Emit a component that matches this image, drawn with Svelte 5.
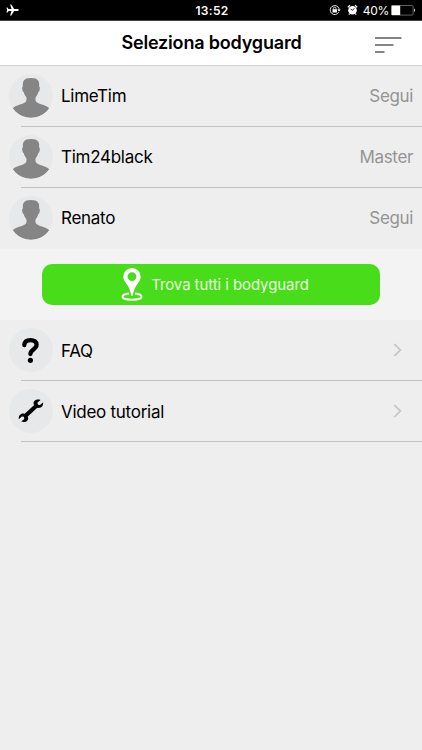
<script lang="ts">
	interface Person {
		name: string;
		action: string;
	}

	const people: Person[] = [
		{ name: 'LimeTim', action: 'Segui' },
		{ name: 'Tim24black', action: 'Master' },
		{ name: 'Renato', action: 'Segui' }
	];

	const links = [
		{ label: 'FAQ', icon: 'help' },
		{ label: 'Video tutorial', icon: 'wrench' }
	];
</script>

<div class="screen">
	<div class="status-bar">
		<div class="status-left">
			<svg width="13" height="12" viewBox="0 0 13 12" fill="#fff">
				<path
					d="M12.8 6c0 .6-.8.9-1.7.9H8.2L5.3 11.4H4.1L5.5 6.9H2.6L1.5 8.4H.5L1.1 6 .5 3.6h1l1.1 1.5h2.9L4.1.6h1.2l2.9 4.5h2.9c.9 0 1.7.3 1.7.9z"
				/>
			</svg>
		</div>
		<span class="time">13:52</span>
		<div class="status-right">
			<svg class="lock" width="12" height="12" viewBox="0 0 12 12" fill="none" stroke="#fff">
				<path d="M9.7 8.2A4.5 4.5 0 1 1 10 4.6V6" stroke-width="0.9" />
				<path d="M8.3 5.5h3.4L10 7.6z" fill="#fff" stroke="none" />
				<rect x="3.5" y="5.2" width="4.4" height="3.3" fill="#fff" stroke="none" />
				<path d="M4.4 5.3V4.5a1.3 1.3 0 0 1 2.6 0v.8" stroke-width="0.8" />
			</svg>
			<svg class="alarm" width="11" height="12" viewBox="0 0 11 12">
				<circle cx="5.5" cy="6.3" r="4.3" fill="#fff" />
				<path d="M.8 3.3 3 1.3M8 1.3l2.2 2M2.6 9.7l-.8 1M8.4 9.7l.8 1" stroke="#fff" stroke-width="1.2" />
				<path d="M3.7 5l1.8 1.4 1.8-2.2" fill="none" stroke="#000" stroke-width="0.8" />
			</svg>
			<span class="percent">40%</span>
			<svg width="25" height="11" viewBox="0 0 25 11">
				<rect x="0.5" y="0.5" width="21.6" height="9.6" rx="1" fill="none" stroke="#777" stroke-width="0.8" />
				<rect x="0.6" y="0.6" width="8.6" height="9.4" fill="#fff" />
				<path d="M23.2 3.6c1.2.5 1.2 3 0 3.5z" fill="#fff" />
			</svg>
		</div>
	</div>

	<header class="header">
		<h1>Seleziona bodyguard</h1>
		<button class="menu" aria-label="Menu">
			<svg width="27" height="18" viewBox="0 0 27 18" stroke="#858585" stroke-width="2">
				<path d="M0 2h26.5M0 9h18.5M0 16h9.5" />
			</svg>
		</button>
	</header>

	<ul class="list">
		{#each people as person}
			<li class="row">
				<span class="avatar">
					<svg width="44" height="44" viewBox="0 0 44 44" fill="#858585">
						<path
							d="M22 4c-3.500 0-6 .7-7.300 2.700-.9 1.500-1 3.300-.8 5.800-.8.200-.9 1.300-.6 3 .3 1.600.7 2.300 1.400 2.500.5 2.100 1.300 3.700 2.600 5.100.4 2.200.2 3.700-.5 4.600-1.900 2.600-9.300 2.700-13.100 6.500C7.600 40 14.200 43.700 22 43.700s14.400-3.700 18.300-9.500c-3.800-3.800-11.200-3.900-13.100-6.500-.7-.9-.9-2.400-.5-4.600 1.300-1.400 2.100-3 2.600-5.100.7-.2 1.100-.9 1.400-2.500.3-1.700.2-2.800-.6-3 .2-2.500.1-4.300-.8-5.800C28 4.700 25.500 4 22 4z"
						/>
					</svg>
				</span>
				<span class="name">{person.name}</span>
				<span class="action">{person.action}</span>
			</li>
		{/each}
	</ul>

	<div class="find">
		<button class="find-button">
			<svg width="22" height="33" viewBox="0 0 22 33">
				<path
					d="M8 25.500C4 26 1.500 27.300 1.500 28.800c0 1.800 4 3 9.500 3s9.500-1.200 9.500-3c0-1.500-2.500-2.800-6.500-3.300"
					fill="none"
					stroke="#fff"
					stroke-width="2"
				/>
				<path
					fill="#fff"
					fill-rule="evenodd"
					d="M11 0a8.700 8.700 0 0 0-8.700 8.700c0 3.500 2.300 5.600 4.300 8.800 1.700 2.700 2.700 5.500 3.600 9.800q.8 1.500 1.600 0c.9-4.300 1.900-7.100 3.600-9.800 2-3.200 4.300-5.300 4.300-8.800A8.700 8.700 0 0 0 11 0zm0 4.200a4.400 4.400 0 1 1 0 8.800 4.400 4.400 0 0 1 0-8.800z"
				/>
			</svg>
			<span>Trova tutti i bodyguard</span>
		</button>
	</div>

	<ul class="list">
		{#each links as link}
			<li class="row">
				<span class="avatar">
					{#if link.icon === 'help'}
						<svg width="44" height="44" viewBox="0 0 44 44">
							<path
								d="M15.300 17c.2-3.300 2.600-4.900 6.200-4.900 3.700 0 6.100 1.700 6.100 4.700 0 4.600-6.200 4.700-6.200 9.200"
								fill="none"
								stroke="#000"
								stroke-width="4.300"
								stroke-linecap="round"
							/>
							<circle cx="21.400" cy="32.300" r="2.600" />
						</svg>
					{:else}
						<svg width="44" height="44" viewBox="0 0 44 44">
							<path d="M15.500 27.800 28.500 15.800" stroke="#000" stroke-width="4.200" />
							<path
								d="M31.600 10.900l-3.100 2.700.4 2.100 2.100.3 3.100-2.800c.5 3.100-1.500 5.700-4.400 5.700-.9 0-1.600-.2-2.300-.5l-2.700-3.100c-.8-2.900 1.800-5.900 6.900-4.400zM12.200 32.600l3.100-2.700-.4-2.100-2.100-.3-3 2.700c-.5-3.200 1.600-5.600 4.400-5.600.9 0 1.600.2 2.300.6l2.600 3c.7 2.900-1.800 5.900-6.900 4.400z"
							/>
						</svg>
					{/if}
				</span>
				<span class="name link-name">{link.label}</span>
				<svg class="chevron" width="9" height="14" viewBox="0 0 9 14" fill="none">
					<path d="M1.300 1 7.300 7l-6 6" stroke="#c3c3c8" stroke-width="1.700" />
				</svg>
			</li>
		{/each}
	</ul>
</div>

<style>
	:global(body) {
		background: #eee;
	}

	.screen {
		height: 750px;
		overflow: hidden;
		background: #eee;
		font-family: Inter, 'Liberation Sans', sans-serif;
		color: #000;
	}

	.status-bar {
		box-sizing: border-box;
		display: grid;
		grid-template-columns: 1fr auto 1fr;
		align-items: center;
		height: 21px;
		padding: 0 6px;
		background: #000;
		border-bottom: 1px solid #444;
		color: #fff;
		font-size: 12px;
	}

	.status-left,
	.status-right {
		display: flex;
		align-items: center;
	}

	.status-right {
		justify-content: flex-end;
	}

	.time {
		padding: 1px 0 0 2px;
		font-size: 12px;
		font-weight: 600;
		letter-spacing: 0.3px;
	}

	.lock {
		margin-right: 6px;
	}

	.alarm {
		margin-right: 5px;
	}

	.percent {
		padding-top: 1px;
		margin-right: 2px;
		letter-spacing: -0.3px;
	}

	.header {
		box-sizing: border-box;
		display: grid;
		grid-template-columns: 1fr auto 1fr;
		align-items: center;
		height: 45px;
		padding: 0 20px 0 21px;
		background: #fff;
		border-bottom: 1px solid #d2d2d2;
	}

	h1 {
		grid-column: 2;
		margin: 0;
		font-size: 18px;
		font-weight: 600;
		line-height: 44px;
		letter-spacing: -0.18px;
		white-space: nowrap;
	}

	button {
		padding: 0;
		border: 0;
		font-family: inherit;
	}

	.menu {
		display: flex;
		justify-self: end;
		margin-top: 3px;
		background: none;
	}

	.list {
		margin: 0;
		padding: 0;
		list-style: none;
	}

	.row {
		box-sizing: border-box;
		display: flex;
		align-items: center;
		height: 61px;
		padding: 0 9px 1px;
		background: linear-gradient(#c2c2c2, #c2c2c2) 21px 100% / 100% 1px no-repeat;
	}

	.list:first-of-type .row:last-child {
		background: none;
	}

	.avatar {
		width: 44px;
		height: 44px;
		margin-right: 8px;
		overflow: hidden;
		background: #e6e8ea;
		border-radius: 50%;
	}

	.avatar svg {
		display: block;
	}

	.name {
		flex: 1;
		font-size: 17px;
		letter-spacing: -0.27px;
	}

	.link-name {
		padding-top: 2px;
	}

	.action {
		color: #949494;
		font-size: 17px;
		letter-spacing: -0.35px;
	}

	.chevron {
		margin-right: 11px;
	}

	.find {
		box-sizing: border-box;
		display: flex;
		height: 71px;
		padding: 15px 42px;
		background: #f3f3f3;
	}

	.find-button {
		display: flex;
		flex: 1;
		align-items: center;
		justify-content: center;
		gap: 8px;
		padding-left: 8px;
		background: #49dc1b;
		border-radius: 10px;
		color: #e6fbdf;
		font-size: 15px;
		letter-spacing: -0.08px;
	}
</style>
